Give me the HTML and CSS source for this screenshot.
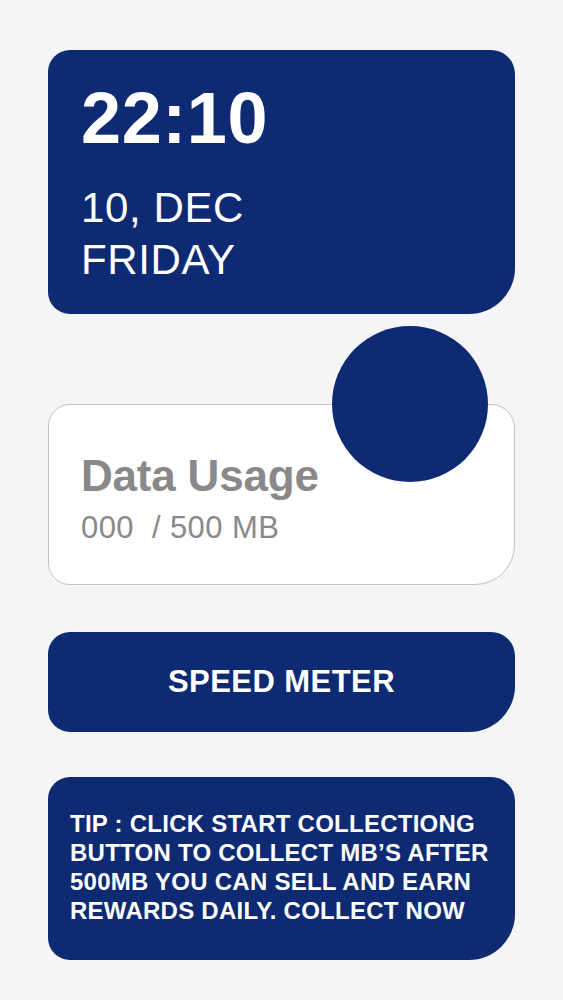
FILE: index.html
```html
<!DOCTYPE html>
<html>
<head lang="en">
    <meta charset="UTF-8">
    <title>Data Collector</title>
    <link rel="stylesheet" href="styles.css">
</head>
<body>
<div id="container">
    <div class="card clock">
        <div class="time">22:10</div>
        <div class="date">10, DEC<br>FRIDAY</div>
    </div>

    <div class="card usage">
        <span class="dot"></span>
        <div class="usage-title">Data Usage</div>
        <div class="usage-num">000&nbsp; / 500 MB</div>
    </div>

    <div class="card speed">SPEED METER</div>

    <div class="card tip">
        TIP : CLICK START COLLECTIONG BUTTON TO COLLECT MB’S AFTER 500MB YOU CAN SELL AND EARN REWARDS DAILY. COLLECT NOW
    </div>
</div>
</body>
</html>
```

FILE: styles.css
```css
* {
    margin: 0;
    padding: 0;
    box-sizing: border-box;
}
body {
    background: #f5f5f7;
    font-family: "Liberation Sans", Arial, sans-serif;
}
#container {
    padding: 50px 48px 40px;
    display: flex;
    flex-direction: column;
}
.card {
    background: #0e2a72;
    color: #fff;
    border-radius: 22px 24px 46px 22px;
}
.clock {
    height: 264px;
    padding: 32px 32px 0 33px;
}
.time {
    font-size: 72px;
    font-weight: bold;
    line-height: 72px;
    letter-spacing: 0.6px;
}
.date {
    margin-top: 28px;
    font-size: 42px;
    line-height: 52px;
    letter-spacing: 0.6px;
}
.usage {
    position: relative;
    margin-top: 90px;
    height: 181px;
    padding: 46px 32px 0;
    background: #fff;
    border: 1px solid #c2c2c4;
    border-radius: 22px 24px 40px 22px;
    color: #898989;
}
.dot {
    position: absolute;
    left: 283px;
    top: -79px;
    width: 156px;
    height: 156px;
    border-radius: 50%;
    background: #0e2a72;
}
.usage-title {
    font-size: 44px;
    font-weight: bold;
    line-height: 50px;
    letter-spacing: -0.2px;
}
.usage-num {
    margin-top: 9px;
    font-size: 31px;
    line-height: 36px;
    letter-spacing: 0.4px;
}
.speed {
    margin-top: 47px;
    height: 100px;
    display: flex;
    align-items: center;
    justify-content: center;
    font-size: 31px;
    font-weight: bold;
    letter-spacing: 0.45px;
}
.tip {
    margin-top: 45px;
    height: 183px;
    padding: 32px 18px 0 22px;
    font-size: 24px;
    font-weight: bold;
    line-height: 29px;
    letter-spacing: 0.25px;
}
```
